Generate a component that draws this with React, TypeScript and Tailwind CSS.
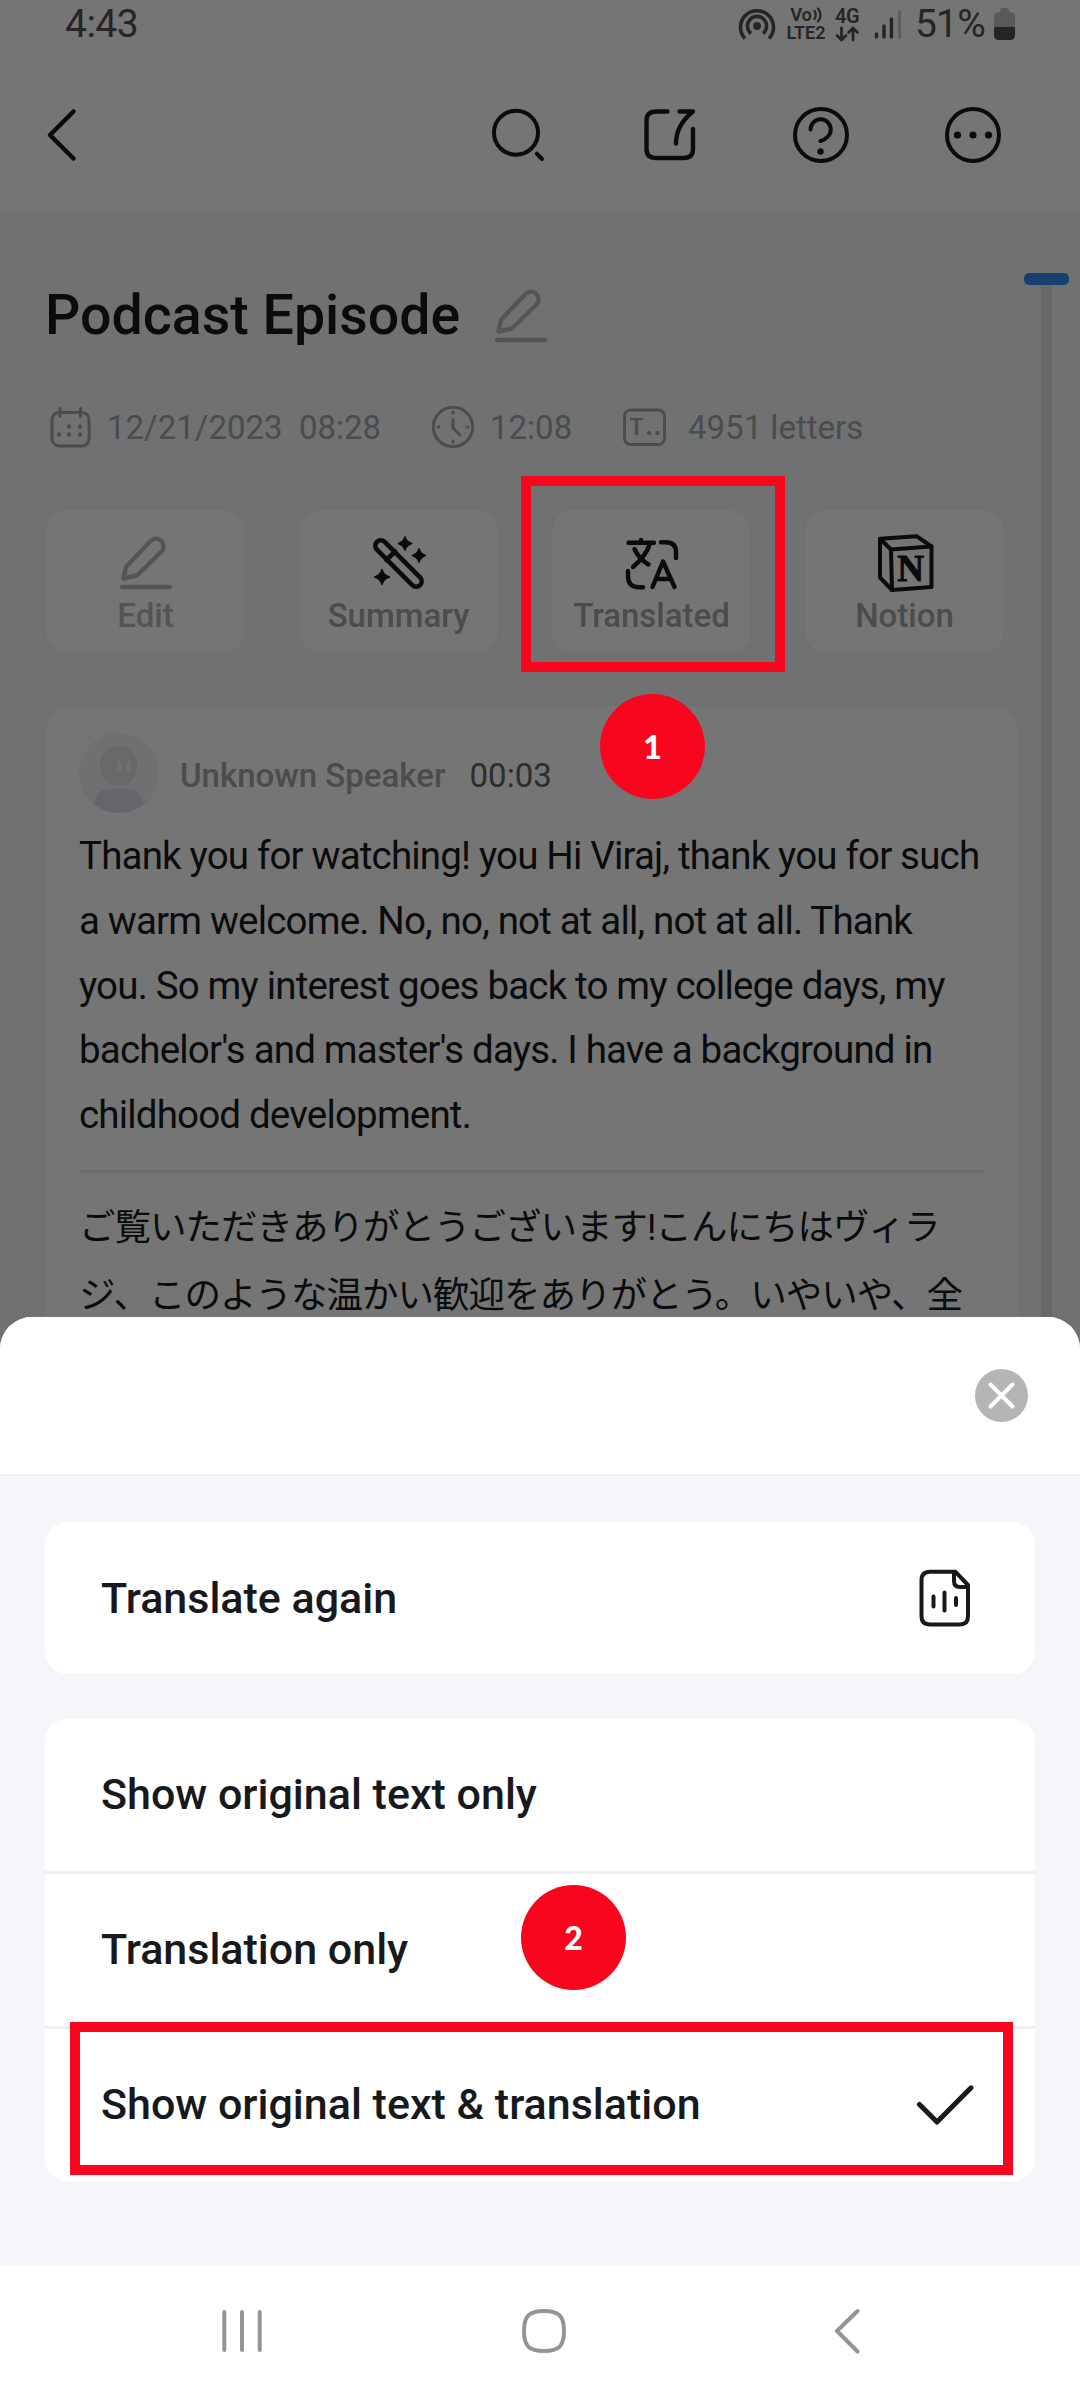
import type { ReactNode } from 'react'

interface IconProps {
  w: number
  h: number
  sw?: number
  className?: string
  children: ReactNode
}

const Icon = ({ w, h, sw = 4, className = '', children }: IconProps) => (
  <svg
    width={w}
    height={h}
    viewBox={`0 0 ${w} ${h}`}
    fill="none"
    stroke="currentColor"
    strokeWidth={sw}
    strokeLinecap="round"
    strokeLinejoin="round"
    className={`shrink-0 ${className}`}
  >
    {children}
  </svg>
)

const PencilIcon = () => (
  <Icon w={54} h={54} sw={4.4}>
    <path d="M4.5 42.5L7 31 31.5 5A7.6 7.6 0 0 1 42.5 15.5L18 39.5Z" />
    <path d="M3 51H51" />
  </Icon>
)

const WandIcon = () => (
  <Icon w={54} h={54} sw={4.6}>
    <rect x="-4" y="22" width="61" height="11" rx="5.5" transform="rotate(45 26.5 27.5)" />
    <path d="M14.5 24L23 15.5" />
    <g fill="currentColor" strokeWidth="1.4">
      <path d="M33 .8Q34.5 6 39.7 7.5 34.5 9 33 14.2 31.5 9 26.3 7.5 31.5 6 33 .8Z" />
      <path d="M47 12.8Q48.5 18 53.5 19.5 48.5 21 47 26.2 45.5 21 40.3 19.5 45.5 18 47 12.8Z" />
      <path d="M10 33.5Q11.6 39.4 17.5 41 11.6 42.6 10 48.5 8.4 42.6 2.5 41 8.4 39.4 10 33.5Z" />
    </g>
  </Icon>
)

const TranslateIcon = () => (
  <Icon w={54} h={54} sw={4.4}>
    <path d="M3.5 6.7H29M16 4V6.7M25 7.5Q21 20 8 31M9.5 13Q14 23 23.5 28.5" />
    <path d="M36 6.3H41Q51 6.3 51 16V22M3 35V40Q3 51.2 14 51.2H18" />
    <path d="M27.5 51L38 25.5 49.5 51M31.5 43H45.5" />
  </Icon>
)

const NotionIcon = () => (
  <Icon w={58} h={58}>
    <path d="M4 4.8L40.5 2.2 55.5 12.5V53L16 56 4 43.5Z" />
    <path d="M4 4.8L15 15.5 55.5 12.5M15 15.5L16 56" />
    <text
      x="34.7"
      y="47"
      textAnchor="middle"
      fill="currentColor"
      strokeWidth="1"
      className="font-['Liberation_Serif',serif] text-[37px] font-bold"
    >
      N
    </text>
  </Icon>
)

const actions = [
  { label: 'Edit', icon: <PencilIcon />, muted: true },
  { label: 'Summary', icon: <WandIcon /> },
  { label: 'Translated', icon: <TranslateIcon /> },
  { label: 'Notion', icon: <NotionIcon /> },
]

const options = ['Show original text only', 'Translation only', 'Show original text & translation']

const StatusBar = () => (
  <div className="flex h-[46px] items-center pt-[2px] pr-[65px] pl-[65px] text-[#525252]">
    <span className="text-[39px] leading-none tracking-[-0.5px]">4:43</span>
    <div className="ml-auto flex items-center">
      <Icon w={38} h={38} sw={3.6}>
        <circle cx="19" cy="21" r="4" fill="currentColor" stroke="none" />
        <path strokeLinecap="butt" d="M13 28.5A9.6 9.6 0 1 1 25 28.5M7 33.5A16.5 16.5 0 1 1 31 33.5" />
      </Icon>
      <div className="ml-[9px] flex w-[42px] flex-col items-center font-semibold">
        <span className="flex items-center text-[18.5px] leading-[18px] tracking-[-0.4px]">
          Vo
          <Icon w={10} h={16} sw={2.2}>
            <path d="M2.5 4Q5 8 2.5 12M6 1.5Q11 8 6 14.5" />
          </Icon>
        </span>
        <span className="text-[18px] leading-[18px]">LTE2</span>
      </div>
      <div className="ml-[7px] flex w-[26px] flex-col items-center font-semibold">
        <span className="text-[20px] leading-[18px] tracking-[-0.5px]">4G</span>
        <Icon w={26} h={17} sw={2.8}>
          <path d="M7.5 3V15M3 10.5L7.5 15 12 10.5M19 15V3M14.5 7.5L19 3 23.5 7.5" />
        </Icon>
      </div>
      <Icon w={30} h={32} sw={3.4} className="ml-[13px]">
        <path d="M3.5 26V29M11 18V29M18.5 11V29" />
        <path d="M26.5 4V29" className="opacity-30" />
      </Icon>
      <span className="ml-[12px] text-[39px] leading-none tracking-[-0.8px]">51%</span>
      <svg width="21" height="32" viewBox="0 0 21 32" className="ml-[9px] shrink-0">
        <path
          d="M6 4V2.5Q6 0 8 0H13Q15 0 15 2.5V4Q21 4 21 8V27Q21 32 16 32H5Q0 32 0 27V8Q0 4 6 4Z"
          fill="#c3c3c3"
        />
        <path d="M0 19H21V27Q21 32 16 32H5Q0 32 0 27Z" fill="#525252" />
      </svg>
    </div>
  </div>
)

const Header = () => (
  <header className="flex h-[213px] flex-col bg-white">
    <StatusBar />
    <div className="flex flex-1 items-center pt-[11px] pr-[77px] pl-[32px]">
      <Icon w={60} h={60} sw={4.5}>
        <path d="M41.5 6.5L18 30 41.5 53.5" />
      </Icon>
      <div className="ml-auto flex gap-[91.5px]">
        <Icon w={60} h={60}>
          <circle cx="27" cy="27.7" r="22" />
          <path d="M47.8 48.7L53 54" />
        </Icon>
        <Icon w={60} h={60} sw={4.4}>
          <path d="M27.5 6.5H16Q6.5 6.5 6.5 16V44Q6.5 53 16 53H44Q53 53 53 44V24" />
          <path d="M39.5 6.5H53Q36 20 36 38.5" />
        </Icon>
        <Icon w={60} h={60}>
          <circle cx="29" cy="30" r="26" />
          <path d="M18.5 24.5A10 10 0 0 1 38.8 24.5C38.8 30 34 34.5 28.5 36" />
          <circle cx="28.5" cy="46.5" r="3.2" fill="currentColor" stroke="none" />
        </Icon>
        <Icon w={60} h={60}>
          <circle cx="30" cy="30" r="26" />
          <g fill="currentColor" stroke="none">
            <circle cx="14.5" cy="30" r="3.6" />
            <circle cx="30" cy="30" r="3.6" />
            <circle cx="45.5" cy="30" r="3.6" />
          </g>
        </Icon>
      </div>
    </div>
  </header>
)

const Meta = () => (
  <div className="mt-[48px] flex h-[44px] items-center text-[33px] leading-none text-[#a3a5a5]">
    <Icon w={42} h={42} sw={3} className="ml-[4px]">
      <rect x="2" y="6.5" width="37" height="33.5" rx="7" />
      <path d="M10 2.5V10.5M30.5 2.5V10.5" />
      <g fill="currentColor" stroke="none">
        <circle cx="19" cy="20.5" r="2.2" />
        <circle cx="30" cy="20.5" r="2.2" />
        <circle cx="9" cy="28.5" r="2.2" />
        <circle cx="19" cy="28.5" r="2.2" />
        <circle cx="30" cy="28.5" r="2.2" />
      </g>
    </Icon>
    <span className="ml-[15px] w-[325px] whitespace-pre">12/21/2023  08:28</span>
    <Icon w={44} h={44} sw={3} className="-ml-px">
      <circle cx="22" cy="22" r="19.7" />
      <path d="M22 14.5V23L29 30" />
      <path d="M22 7V8M22 36V37M7 22H8M36 22H37" />
    </Icon>
    <span className="ml-[15px] w-[132px]">12:08</span>
    <Icon w={44} h={40} sw={3}>
      <rect x="2.5" y="3" width="40" height="34.5" rx="6" />
      <text x="7.5" y="28" fill="currentColor" stroke="none" className="text-[23px] font-medium">
        T
      </text>
      <g fill="currentColor" stroke="none">
        <circle cx="27" cy="26" r="2.2" />
        <circle cx="35.5" cy="26" r="2.2" />
      </g>
    </Icon>
    <span className="ml-[22px]">4951 letters</span>
  </div>
)

const Transcript = () => (
  <div className="mt-[52px] h-[800px] w-[972px] rounded-[24px] bg-white px-[33px] pt-[27px]">
    <div className="flex h-[80px] items-center text-[33px] leading-none">
      <svg width="80" height="80" viewBox="0 0 80 80" className="shrink-0">
        <circle cx="40" cy="40" r="40" fill="#f0f3f6" />
        <rect x="21" y="13.5" width="37" height="38.5" rx="17" fill="#e0e3e8" />
        <rect x="38.5" y="28" width="4.5" height="10" rx="2.2" fill="#f4f6f8" />
        <rect x="47" y="28" width="4.5" height="10" rx="2.2" fill="#f4f6f8" />
        <path d="M14.5 71Q18 56 30 56H50Q61 56 65.5 71Q54 80 40 80T14.5 71Z" fill="#dcdfe5" />
      </svg>
      <span className="mt-[5px] ml-[21px] font-medium text-[#a3a5a5]">Unknown Speaker</span>
      <span className="mt-[5px] ml-[24px] text-[#606363]">00:03</span>
    </div>
    <p className="mt-[11px] text-[38.5px] leading-[64.75px] tracking-[-0.82px] whitespace-nowrap">
      Thank you for watching! you Hi Viraj, thank you for such
      <br />
      a warm welcome. No, no, not at all, not at all. Thank
      <br />
      you. So my interest goes back to my college days, my
      <br />
      bachelor's and master's days. I have a background in
      <br />
      childhood development.
    </p>
    <div className="mt-[22px] h-[3px] bg-[#eceeee]" />
    <p
      lang="ja"
      className="mt-[21px] font-[Roboto,'Noto_Sans_CJK_JP',sans-serif] text-[36.5px] leading-[68px] tracking-[-1px] whitespace-nowrap"
    >
      ご覧いただきありがとうございます!こんにちはヴィラ
      <br />
      ジ、このような温かい歓迎をありがとう。いやいや、全
    </p>
  </div>
)

const Page = () => (
  <div className="flex h-[2400px] flex-col overflow-hidden bg-[#f5f6fa] text-[#17191c]">
    <Header />
    <div className="flex">
      <main className="w-[1024px] pl-[46px]">
        <div className="mt-[62px] flex h-[82px] items-center">
          <h1 className="-ml-px w-[449px] text-[55.5px] leading-none font-medium whitespace-nowrap">
            Podcast Episode
          </h1>
          <span className="text-[#b8b8b8]">
            <PencilIcon />
          </span>
        </div>
        <Meta />
        <div className="mt-[60px] -ml-px flex gap-[52px]">
          {actions.map((action) => (
            <div
              key={action.label}
              className="flex h-[145px] w-[201px] shrink-0 flex-col items-center rounded-[22px] border border-[#eff1f5] bg-white pt-[26px]"
            >
              <div className={`flex h-[54px] items-center ${action.muted ? 'text-[#b8b8b8]' : ''}`}>
                {action.icon}
              </div>
              <span
                className={`mt-[6px] text-[33px] leading-[39px] font-medium ${
                  action.muted ? 'text-[#b8b8b8]' : 'text-[#a3a5a5]'
                }`}
              >
                {action.label}
              </span>
            </div>
          ))}
        </div>
        <Transcript />
      </main>
      <div className="flex w-[45px] flex-col items-center pt-[60px]">
        <div className="h-[12px] w-[45px] rounded-[5px] bg-[#348bf3]" />
        <div className="h-[1200px] w-[11px] bg-[#e1e3e6]" />
      </div>
    </div>
  </div>
)

const Sheet = () => (
  <section className="absolute inset-x-0 bottom-0 flex h-[1083px] flex-col overflow-hidden rounded-t-[32px] bg-[#f5f6fa] text-[#17191c]">
    <div className="flex h-[159px] items-center justify-end border-b-2 border-[#eff0f3] bg-white pr-[52px] pb-px">
      <svg width="53" height="53" viewBox="0 0 53 53">
        <circle cx="26.5" cy="26.5" r="26.5" fill="#b4b6b5" />
        <path d="M15.5 15.5L37.5 37.5M37.5 15.5L15.5 37.5" stroke="#fff" strokeWidth="4" strokeLinecap="round" />
      </svg>
    </div>
    <div className="flex flex-1 flex-col gap-[45px] px-[45px] pt-[46px] text-[43px] leading-none font-medium">
      <div className="flex h-[152px] items-center justify-between rounded-[22px] bg-white pr-[63px] pl-[56px]">
        Translate again
        <Icon w={54} h={58}>
          <path d="M37.5 2.8H12Q3.5 2.8 3.5 11.5V47Q3.5 55.5 12 55.5H42Q50 55.5 50 47V16Z" />
          <path d="M36 4V12Q36 18 42 18H49" />
          <path d="M15.5 27.5V37.5M26.5 23.5V41.5M38 29V36" />
        </Icon>
      </div>
      <div className="overflow-hidden rounded-[22px] bg-white">
        {options.map((option, i) => (
          <div
            key={option}
            className={`box-content flex h-[150px] items-center justify-between pr-[61px] pb-[2px] pl-[56px] ${
              i > 0 ? 'border-t-[3px] border-[#eeeff1]' : ''
            }`}
          >
            {option}
            {i === 2 && (
              <Icon w={58} h={40} sw={5} className="mt-[2px]">
                <path d="M3.5 19.5L21 37 55 2.8" />
              </Icon>
            )}
          </div>
        ))}
      </div>
    </div>
    <nav className="flex h-[135px] items-center bg-white pb-[3px] text-[#949494]">
      <Icon w={44} h={46} className="ml-[220px]">
        <path d="M4.3 4V42M22 4V42M39.7 4V42" />
      </Icon>
      <Icon w={44} h={44} className="ml-[258px]">
        <path d="M22 2C37 2 42 7 42 22S37 42 22 42 2 37 2 22 7 2 22 2Z" />
      </Icon>
      <Icon w={28} h={46} className="ml-[269px]">
        <path d="M22.5 3L2 23 22.5 43.5" />
      </Icon>
    </nav>
  </section>
)

const Badge = ({ n, className }: { n: number; className: string }) => (
  <div
    className={`absolute flex size-[105px] items-center justify-center rounded-full bg-[#f9061e] font-[Lato,sans-serif] text-[32px] leading-none font-black text-white ${className}`}
  >
    {n}
  </div>
)

const App = () => {
  return (
    <div className="relative h-[2400px] w-[1080px] overflow-hidden font-[Roboto,sans-serif]">
      <Page />
      <div className="absolute inset-0 bg-black/54" />
      <Sheet />
      <div className="absolute top-[476px] left-[521px] h-[196px] w-[264px] border-[10px] border-[#f9061e]" />
      <Badge n={1} className="top-[694px] left-[600px]" />
      <div className="absolute top-[2022px] left-[70px] h-[153px] w-[943px] border-[10px] border-[#f9061e]" />
      <Badge n={2} className="top-[1885px] left-[521px]" />
    </div>
  )
}

export default App
